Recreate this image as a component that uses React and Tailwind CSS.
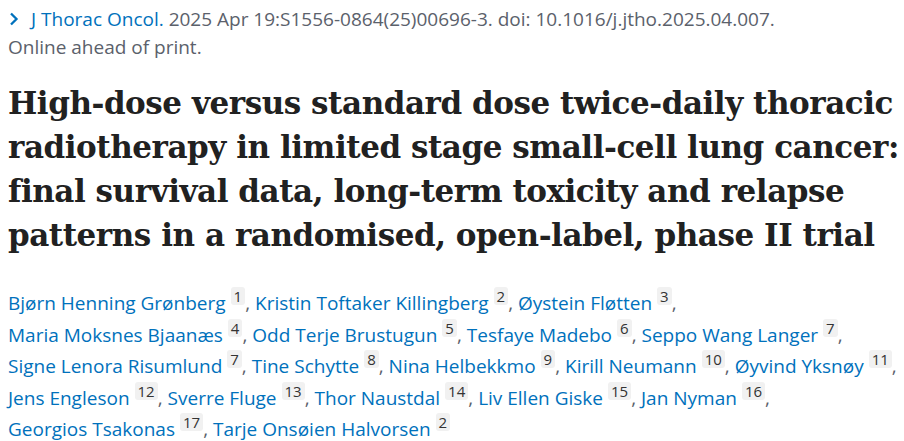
import React from 'react';

const authors = [
  [['Bjørn Henning Grønberg', 1], ['Kristin Toftaker Killingberg', 2], ['Øystein Fløtten', 3]],
  [['Maria Moksnes Bjaanæs', 4], ['Odd Terje Brustugun', 5], ['Tesfaye Madebo', 6], ['Seppo Wang Langer', 7]],
  [['Signe Lenora Risumlund', 7], ['Tine Schytte', 8], ['Nina Helbekkmo', 9], ['Kirill Neumann', 10], ['Øyvind Yksnøy', 11]],
  [['Jens Engleson', 12], ['Sverre Fluge', 13], ['Thor Naustdal', 14], ['Liv Ellen Giske', 15], ['Jan Nyman', 16]],
  [['Georgios Tsakonas', 17], ['Tarje Onsøien Halvorsen', 2]],
];

const titleLines = [
  'High-dose versus standard dose twice-daily thoracic',
  'radiotherapy in limited stage small-cell lung cancer:',
  'final survival data, long-term toxicity and relapse',
  'patterns in a randomised, open-label, phase II trial',
];

function Badge({ n }) {
  return (
    <span className="ml-[5px] inline-block rounded-[3px] bg-[#f1f1f1] px-[3px] py-[1px] align-[8px] text-[15px] leading-[16px] text-[#333]">
      {n}
    </span>
  );
}

export default function App() {
  return (
    <div className="min-h-[441px] bg-white px-2 pt-[5px] font-['Open_Sans',sans-serif] text-[#5b616b]">
      <div className="text-[19px] leading-[28px]">
        <div className="flex items-center">
          <svg viewBox="0 0 10 14" className="mr-[12px] ml-[1px] h-[14px] w-[10px]">
            <path d="M2 1.5 L7.5 7 L2 12.5" fill="none" stroke="#0071bc" strokeWidth="2.3" />
          </svg>
          <span>
            <span className="text-[#0071bc]">J Thorac Oncol.</span> 2025 Apr 19:S1556-0864(25)00696-3. doi: 10.1016/j.jtho.2025.04.007.
          </span>
        </div>
        <div>Online ahead of print.</div>
      </div>

      <h1 className="mt-[20px] font-['DejaVu_Serif',serif] text-[31px] font-bold leading-[44px] tracking-[-0.45px] text-[#212121]">
        {titleLines.map((l) => (
          <div key={l} className="whitespace-nowrap">{l}</div>
        ))}
      </h1>

      <div className="mt-[30px] text-[19px] leading-[30.5px] text-[#0071bc]">
        {authors.map((line, i) => (
          <div key={i} className="whitespace-nowrap">
            {line.map(([name, n], j) => (
              <span key={name}>
                <span>{name}</span>
                <Badge n={n} />
                {(j < line.length - 1 || i < authors.length - 1) && <span className="text-[#5b616b]">, </span>}
              </span>
            ))}
          </div>
        ))}
      </div>
    </div>
  );
}
